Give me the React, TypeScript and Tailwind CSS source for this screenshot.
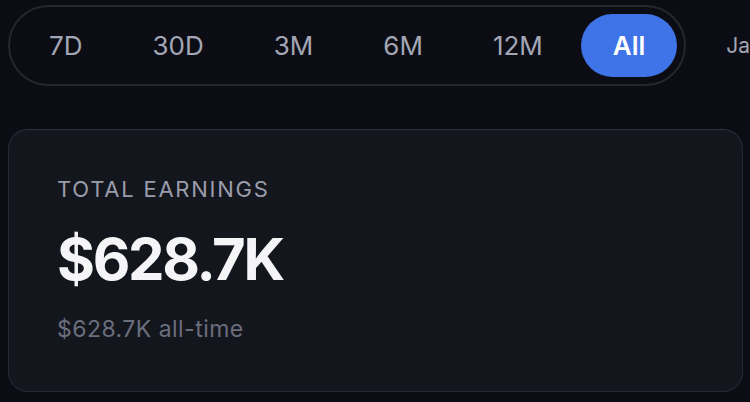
import React from "react";

const ranges = ["7D", "30D", "3M", "6M", "12M", "All"];

export default function App() {
  return (
    <div
      className="w-[750px] h-[402px] overflow-hidden bg-[#0c0d14] pt-[5px] px-[8px]"
      style={{ fontFamily: "Inter, 'Noto Sans', sans-serif" }}
    >
      <div className="flex items-center gap-[40px] whitespace-nowrap">
        <div className="flex items-center gap-[6px] rounded-full border-2 border-[#25262e] p-[7px] shrink-0">
          {ranges.map((r) => (
            <button
              key={r}
              className={
                r === "All"
                  ? "h-[63px] px-[32px] rounded-full bg-[#3f73e8] text-white text-[26px] leading-none font-semibold"
                  : "h-[63px] px-[32px] rounded-full text-[#a3a6b5] text-[26px] leading-none font-normal"
              }
            >
              {r}
            </button>
          ))}
        </div>
        <span className="text-[21px] text-[#a3a6b5] shrink-0">Jan 1, 2023 – Dec 31, 2024</span>
      </div>

      <div className="mt-[43px] h-[263px] w-[735px] rounded-[20px] border border-[#282a33] border-t-[#30323b] bg-[#14161e] px-[48px] pt-[45px]">
        <div className="text-[22px] tracking-[0.08em] text-[#9a9cab] leading-[28px]">TOTAL EARNINGS</div>
        <div className="mt-[23px] text-[58px] font-bold tracking-[-0.04em] text-[#f5f5f7] leading-[66px]">$628.7K</div>
        <div className="mt-[23px] text-[23px] tracking-[0.02em] text-[#6b6e7c] leading-[28px]">$628.7K all-time</div>
      </div>
    </div>
  );
}
